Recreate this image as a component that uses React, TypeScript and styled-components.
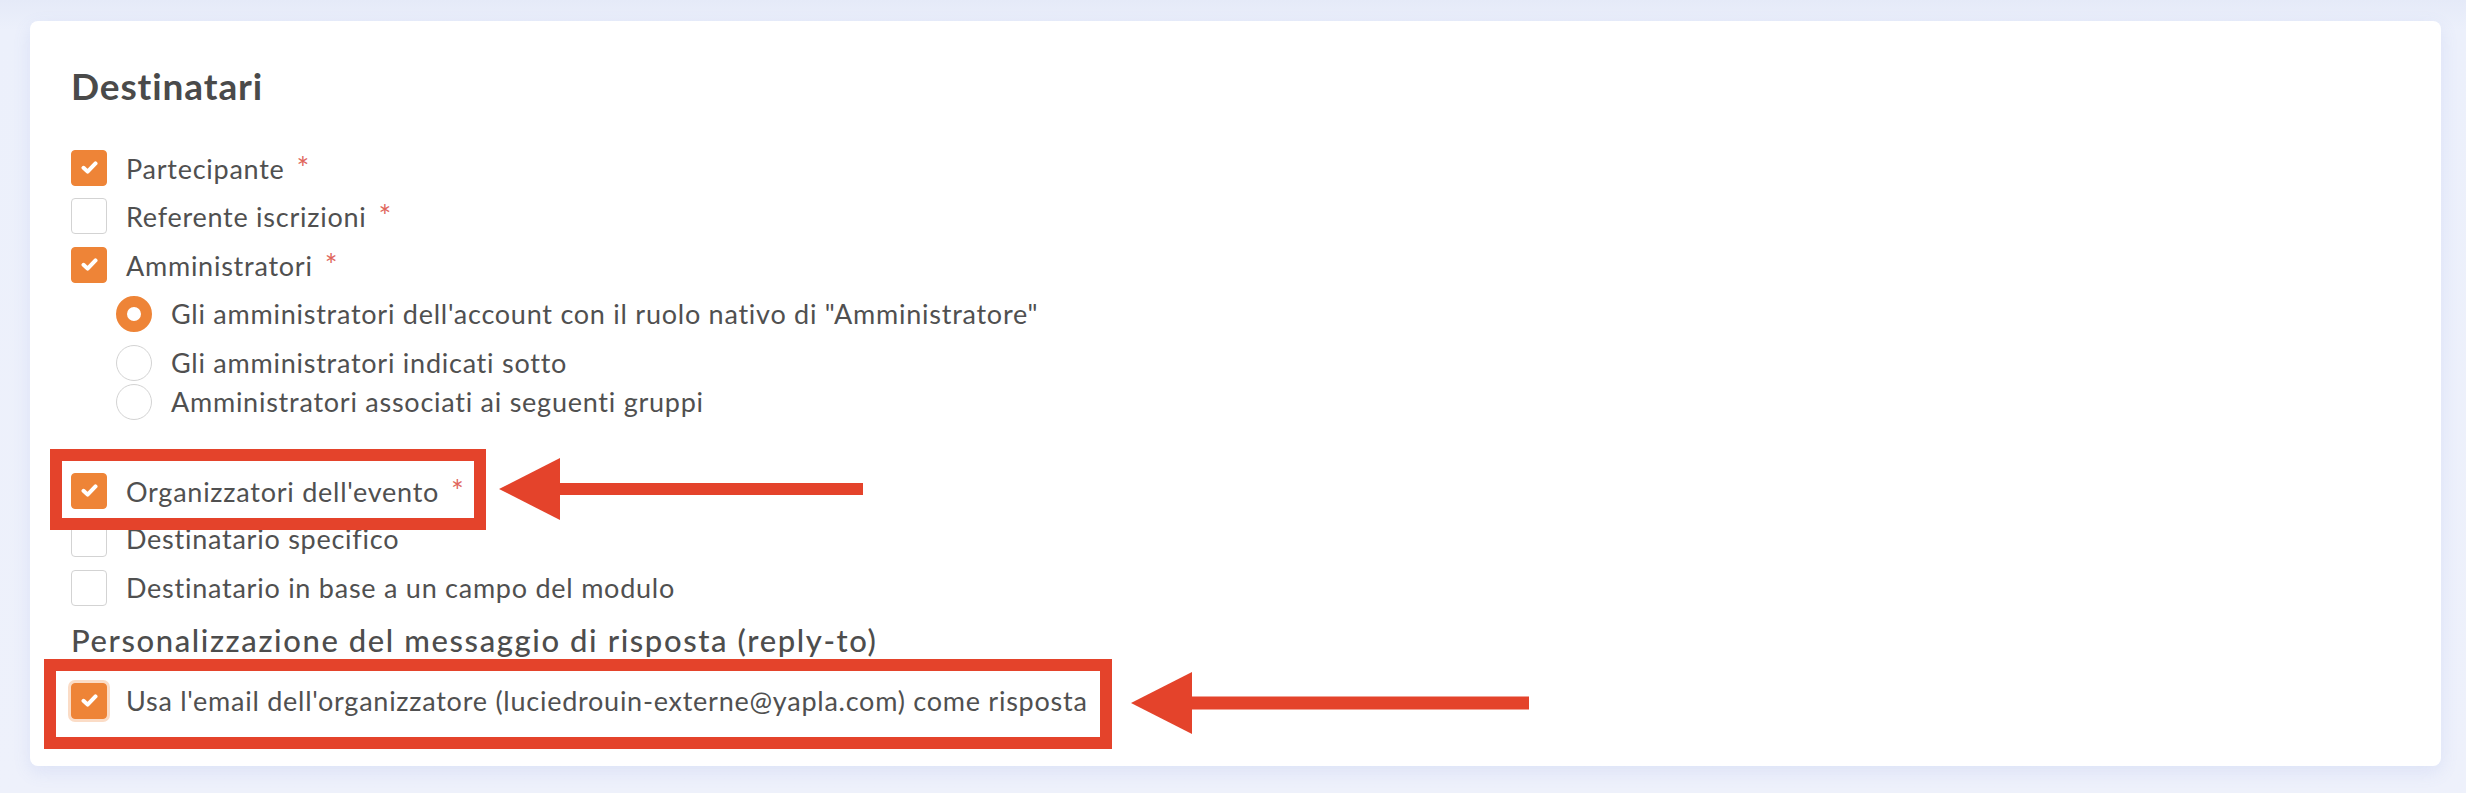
import React from 'react';
import styled, { createGlobalStyle } from 'styled-components';

const GlobalStyle = createGlobalStyle`
    html, body {
        margin: 0;
        padding: 0;
    }
    body {
        font-family: Lato, "Liberation Sans", sans-serif;
        background: #eef1fb;
    }
`

const ORANGE = '#ee8437';
const RED = '#e4432b';

type Item = { label: string; checked?: boolean; required?: boolean; mt: number };

const recipients: Item[] = [
    { label: 'Partecipante', checked: true, required: true, mt: 41.6 },
    { label: 'Referente iscrizioni', required: true, mt: 12.5 },
    { label: 'Amministratori', checked: true, required: true, mt: 12.5 },
];

const adminModes: Item[] = [
    { label: 'Gli amministratori dell\'account con il ruolo nativo di "Amministratore"', checked: true, mt: 13 },
    { label: 'Gli amministratori indicati sotto', mt: 13 },
    { label: 'Amministratori associati ai seguenti gruppi', mt: 3 },
];

const others: Item[] = [
    { label: 'Destinatario specifico', mt: 12 },
    { label: 'Destinatario in base a un campo del modulo', mt: 13 },
];

const Check = () => (
    <svg width="17" height="13" viewBox="0 0 17 13">
        <path d="M2.5 6.8 L6.6 10.6 L14.5 2.4" fill="none" stroke="#fff" strokeWidth="4" strokeLinecap="round" strokeLinejoin="round" />
    </svg>
);

const Arrow = ({ width, shaft }: { width: number; shaft: number }) => (
    <svg width={width} height="62" viewBox={`0 0 ${width} 62`}>
        <polygon points="0,31 61,0 61,62" fill={RED} />
        <rect x="60" y={31 - shaft / 2} width={width - 60} height={shaft} fill={RED} />
    </svg>
);

const Checkbox = ({ checked, focused }: { checked?: boolean; focused?: boolean }) => (
    <Box $checked={checked} $focused={focused}>{checked && <Check />}</Box>
);

const Label = ({ label, required }: { label: string; required?: boolean }) => (
    <Text>
        {label}
        {required && <Star>*</Star>}
    </Text>
);

export default function App() {
    return (
        <>
            <GlobalStyle />
            <Page>
                <Card>
                    <Title>Destinatari</Title>
                    {recipients.map((r) => (
                        <Row key={r.label} $mt={r.mt}>
                            <Checkbox checked={r.checked} />
                            <Label label={r.label} required={r.required} />
                        </Row>
                    ))}
                    {adminModes.map((r) => (
                        <Row key={r.label} $mt={r.mt} $indent={45}>
                            <Radio $checked={r.checked} />
                            <Label label={r.label} />
                        </Row>
                    ))}
                    <Row $mt={53}>
                        <Highlight $inset="-24px -21px -21px -21px">
                            <Checkbox checked />
                            <Label label="Organizzatori dell'evento" required />
                            <Pointer $gap={34} $top={-15}>
                                <Arrow width={364} shaft={12} />
                            </Pointer>
                        </Highlight>
                    </Row>
                    {others.map((r) => (
                        <Row key={r.label} $mt={r.mt}>
                            <Checkbox />
                            <Label label={r.label} />
                        </Row>
                    ))}
                    <Subtitle>Personalizzazione del messaggio di risposta (reply-to)</Subtitle>
                    <Row $mt={23}>
                        <Highlight $inset="-24px -24px -30px -27px">
                            <Checkbox checked focused />
                            <Label label="Usa l'email dell'organizzatore (luciedrouin-externe@yapla.com) come risposta" />
                            <Pointer $gap={43} $top={-10.5}>
                                <Arrow width={398} shaft={13} />
                            </Pointer>
                        </Highlight>
                    </Row>
                </Card>
            </Page>
        </>
    );
}

const Page = styled.div`
    box-sizing: border-box;
    height: 793px;
    padding: 21px 25px 27px 30px;
    background: linear-gradient(180deg, #e5eaf8 0px, #ecf0fb 30px, #eef1fb 100%);
`
const Card = styled.div`
    box-sizing: border-box;
    height: 100%;
    padding: 43px 42px 0 41px;
    background: #fff;
    border-radius: 8px;
    box-shadow: 0 6px 18px rgba(100, 120, 210, 0.12);
    display: flex;
    flex-direction: column;
    align-items: flex-start;
`
const Title = styled.h2`
    margin: 0;
    font-size: 37px;
    line-height: 1.2;
    font-weight: 700;
    letter-spacing: 0.9px;
    color: #4a4a4a;
`
const Subtitle = styled.h3`
    margin: 16.5px 0 0;
    font-size: 31px;
    line-height: 1.2;
    font-weight: 500;
    color: #4d4d4d;
    letter-spacing: 1.6px;
`
const Row = styled.div<{ $mt: number; $indent?: number }>`
    display: flex;
    align-items: center;
    gap: 19px;
    height: 36px;
    margin-top: ${(p) => p.$mt}px;
    padding-left: ${(p) => p.$indent || 0}px;
`
const Highlight = styled.div<{ $inset: string }>`
    position: relative;
    display: flex;
    align-items: center;
    gap: 19px;
    height: 36px;

    &::before {
        content: '';
        position: absolute;
        inset: ${(p) => p.$inset};
        border: 12px solid ${RED};
        pointer-events: none;
    }
`
const Pointer = styled.div<{ $gap: number; $top: number }>`
    position: absolute;
    left: calc(100% + ${(p) => p.$gap}px);
    top: ${(p) => p.$top}px;
    display: flex;
`
const Box = styled.span<{ $checked?: boolean; $focused?: boolean }>`
    box-sizing: border-box;
    flex: none;
    width: 36px;
    height: 36px;
    border-radius: 4px;
    display: flex;
    align-items: center;
    justify-content: center;
    background: ${(p) => (p.$checked ? ORANGE : '#fff')};
    border: 1px solid ${(p) => (p.$checked ? ORANGE : '#d3d3d3')};
    box-shadow: ${(p) => (p.$focused ? '0 0 0 3px #fbdcc6' : 'none')};
`
const Radio = styled.span<{ $checked?: boolean }>`
    box-sizing: border-box;
    flex: none;
    width: 36px;
    height: 36px;
    border-radius: 50%;
    background: #fff;
    border: ${(p) => (p.$checked ? `11.5px solid ${ORANGE}` : '1px solid #d3d3d3')};
`
const Text = styled.span`
    font-size: 27px;
    line-height: 36px;
    letter-spacing: 0.75px;
    color: #505050;
    white-space: nowrap;
`
const Star = styled.span`
    margin-left: 12px;
    font-size: 30px;
    color: #e0665c;
`
